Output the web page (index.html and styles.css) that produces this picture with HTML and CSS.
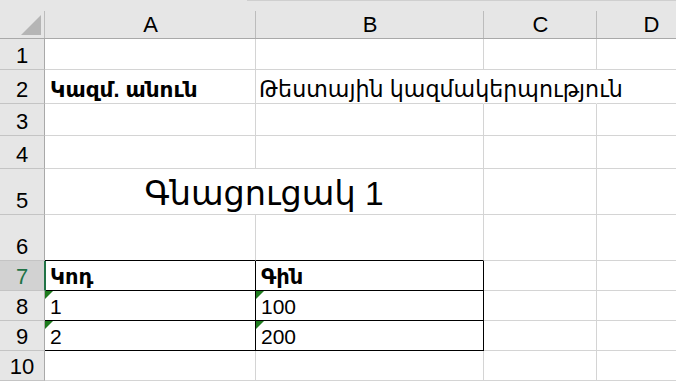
FILE: index.html
```
<!DOCTYPE html>
<html>
<head>
<meta charset="utf-8">
<link rel="stylesheet" href="styles.css">
</head>
<body>
<div class="sheet">
  <div class="ch corner"><svg class="tri" width="22" height="22" viewBox="0 0 22 22"><polygon points="21,0 21,20 1,20" fill="#b5b5b5"/></svg></div>
  <div class="ch">A</div>
  <div class="ch">B</div>
  <div class="ch">C</div>
  <div class="ch last">D</div>

  <div class="rh">1</div>
  <div class="c"></div><div class="c"></div><div class="c"></div><div class="c"></div>

  <div class="rh">2</div>
  <div class="c b arm-b">Կազմ. անուն</div>
  <div class="c nor arm">Թեստային կազմակերպություն</div>
  <div class="c nor"></div>
  <div class="c"></div>

  <div class="rh">3</div>
  <div class="c"></div><div class="c"></div><div class="c"></div><div class="c"></div>

  <div class="rh">4</div>
  <div class="c"></div><div class="c"></div><div class="c"></div><div class="c"></div>

  <div class="rh">5</div>
  <div class="c title">Գնացուցակ 1</div>
  <div class="c"></div><div class="c"></div>

  <div class="rh">6</div>
  <div class="c tb"></div><div class="c tb"></div><div class="c"></div><div class="c"></div>

  <div class="rh sel">7</div>
  <div class="c t b">Կոդ</div>
  <div class="c t b">Գին</div>
  <div class="c"></div><div class="c"></div>

  <div class="rh">8</div>
  <div class="c t flag">1</div>
  <div class="c t flag">100</div>
  <div class="c"></div><div class="c"></div>

  <div class="rh">9</div>
  <div class="c t flag">2</div>
  <div class="c t flag">200</div>
  <div class="c"></div><div class="c"></div>

  <div class="rh">10</div>
  <div class="c"></div><div class="c"></div><div class="c"></div><div class="c"></div>
</div>
</body>
</html>
```

FILE: styles.css
```
* { box-sizing: border-box; margin: 0; padding: 0; }
html, body { margin: 0; background: #fff; overflow: hidden; }
body {
  font-family: "Liberation Sans", "DejaVu Sans", sans-serif;
  font-size: 21px;
  color: #000;
}
.sheet {
  position: relative;
  display: grid;
  grid-template-columns: 45px 211px 228px 113px 109px;
  grid-template-rows: 39px 31px 34px 32px 33px 46px 46px 30px 30px 30px 30px;
  width: 706px;
  height: 381px;
}
.sheet::before {
  content: "";
  position: absolute;
  top: 0; left: 247px; right: 0;
  height: 1px;
  background: #cfcfcf;
  z-index: 2;
}
.ch {
  background: linear-gradient(#bcbcbc, #bcbcbc) right bottom / 1px 27px no-repeat, #e6e6e6;
  border-bottom: 1px solid #a9a9a9;
  display: flex;
  align-items: flex-end;
  justify-content: center;
  font-size: 22px;
  line-height: 24px;
  padding-bottom: 1px;
}
.ch.last { background: #e6e6e6; }
.corner { position: relative; }
.tri { position: absolute; left: 20px; top: 15px; }
.rh {
  background: #e6e6e6;
  border-right: 1px solid #a9a9a9;
  border-bottom: 1px solid #c4c4c4;
  display: flex;
  align-items: flex-end;
  justify-content: center;
  font-size: 22px;
  line-height: 24px;
  padding-bottom: 1px;
}
.rh.sel {
  background: #d2d2d2;
  color: #217346;
  border-right-color: #217346;
  box-shadow: 1px 0 0 #217346;
  position: relative;
  z-index: 1;
}
.c {
  position: relative;
  border-right: 1px solid #d4d4d4;
  border-bottom: 1px solid #d4d4d4;
  display: flex;
  align-items: flex-end;
  padding: 0 0 1px 5px;
  line-height: 24px;
  white-space: nowrap;
}
.c.nor { border-right-color: transparent; }
.arm { padding-left: 3px; font-size: 22.2px; }
.arm-b { font-size: 21.6px; }
.b { font-weight: bold; }
.title {
  grid-column: 2 / 4;
  justify-content: center;
  font-size: 33.5px;
  line-height: 36px;
  padding: 0 0 2px 0;
}
.tb { border-bottom-color: #000; }
.t { border-right-color: #000; border-bottom-color: #000; }
.flag::before {
  content: "";
  position: absolute;
  top: 0; left: 0;
  border-top: 8px solid #1e7b1e;
  border-right: 8px solid transparent;
}
```
